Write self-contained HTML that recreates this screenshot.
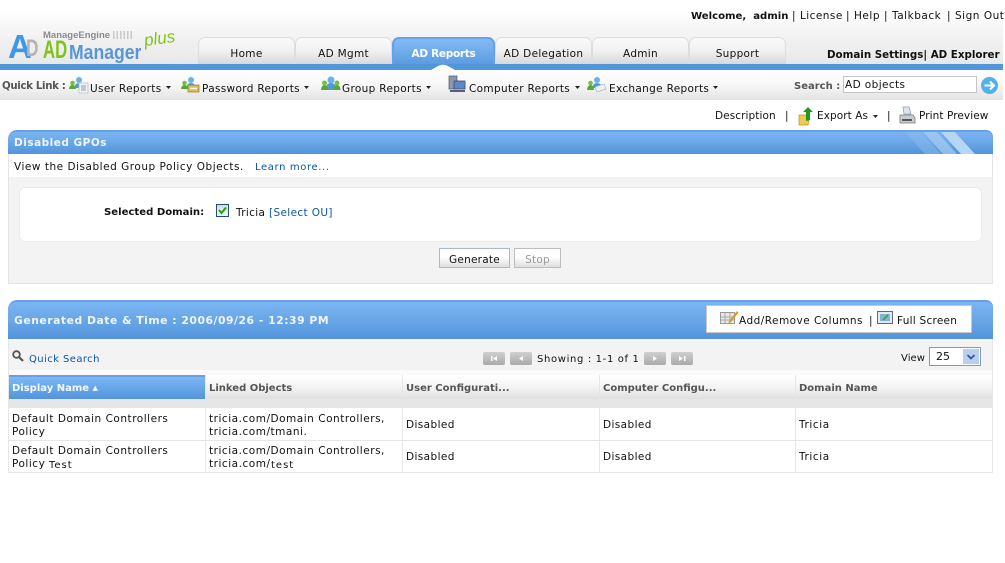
<!DOCTYPE html>
<html><head><meta charset="utf-8">
<style>
html,body{margin:0;padding:0;background:#fff;width:1005px;height:563px;overflow:hidden}
body{position:relative;font-family:"DejaVu Sans","Liberation Sans",sans-serif;font-size:10.5px;color:#111}
.t{position:absolute;white-space:nowrap;line-height:13px;margin-top:1px;letter-spacing:.52px}
.n{letter-spacing:.08px}
.m{letter-spacing:.33px}
.bd{font-weight:bold;letter-spacing:0}
.b{position:absolute}
.tab{position:absolute;top:37px;height:27px;box-sizing:border-box;border:1px solid #ddd;border-bottom:0;border-radius:7px 7px 0 0;background:linear-gradient(#fafafa,#f1f1f1 50%,#d8d8d8);text-align:center;line-height:33px;font-size:10.5px;color:#111;letter-spacing:.3px}
.hd{position:absolute;background:linear-gradient(#79b5f3,#6fabea 35%,#5294db);border-radius:9px 7px 0 0;border-top:2px solid #6a9fe8;box-sizing:border-box}
.th{position:absolute;top:375px;height:24px;background:linear-gradient(#fff,#f4f4f4 50%,#dfdfdf);font-weight:bold;color:#555;font-size:10px;line-height:27px;padding-left:4px;box-sizing:border-box}
.v{position:absolute;background:#e6e6e6;width:2px}
.h{position:absolute;background:#e6e6e6;height:1px}
.l{color:#0a56a6}
.pg{position:absolute;top:352px;width:22px;height:13px;border-radius:2px;background:linear-gradient(#cfcfcf,#aaa)}
.pg svg{display:block}
svg{position:absolute;overflow:visible}
</style></head><body>

<div class="b" style="left:0;top:0;width:1003px;height:64px;background:linear-gradient(#fff,#fff 15%,#f3f3f3 55%,#e8e8e8)"></div>

<!-- logo -->
<div class="t bd" style="left:43px;top:28px;font:bold 9.500px/13px 'Liberation Sans',sans-serif;color:#8b8b8b">ManageEngine</div>
<div class="b" style="left:113px;top:31px;width:20px;height:8px;background:repeating-linear-gradient(90deg,#c8c8c8 0 1.500px,transparent 1.500px 3.500px)"></div>
<div class="t bd" style="left:8px;top:29px;font:bold 33px/33px 'Liberation Sans',sans-serif;color:#3f97ea">A</div>
<div class="t bd" style="left:26px;top:34px;font:bold 24px/28px 'Liberation Sans',sans-serif;color:#b5b5b0;transform:scaleX(.72);transform-origin:left">D</div>
<div class="t bd" style="left:43px;top:37px;font:bold 25px/24px 'Liberation Sans',sans-serif;color:#7fc31c;transform:scaleX(.67);transform-origin:left">AD</div>
<div class="t bd" style="left:69px;top:41px;font:bold 20px/22px 'Liberation Sans',sans-serif;color:#5796da;transform:scaleX(.88);transform-origin:left">Manager</div>
<div class="t bd" style="left:144px;top:27px;font:italic 17px/22px 'Liberation Sans',sans-serif;color:#7fc31c;transform:rotate(-8deg)">plus</div>

<!-- top links -->
<div class="t bd" style="left:691px;top:9px;font-size:10.100px">Welcome,&nbsp; admin</div>
<div class="t" style="left:792px;top:9px">|</div>
<div class="t" style="left:800px;top:9px;letter-spacing:.45px">License</div>
<div class="t" style="left:846px;top:9px">|</div>
<div class="t" style="left:854px;top:9px">Help</div>
<div class="t" style="left:884px;top:9px">|</div>
<div class="t" style="left:892px;top:9px">Talkback</div>
<div class="t" style="left:947px;top:9px">|</div>
<div class="t" style="left:955px;top:9px">Sign Out</div>

<!-- tabs -->
<div class="tab" style="left:198px;width:97px">Home</div>
<div class="tab" style="left:295px;width:97px">AD Mgmt</div>
<div class="tab" style="left:392px;width:103px;border:2px solid #68a0ec;border-bottom:0;background:linear-gradient(#83bcf5,#5b9ce0);color:#fff;font-weight:bold;line-height:31px;letter-spacing:-.3px">AD Reports</div>
<div class="tab" style="left:495px;width:97px">AD Delegation</div>
<div class="tab" style="left:592px;width:97px">Admin</div>
<div class="tab" style="left:689px;width:97px">Support</div>
<div class="t bd" style="left:827px;top:48px;font-size:10.300px">Domain Settings| AD Explorer</div>

<!-- blue bar -->
<div class="b" style="left:0;top:64px;width:1003px;height:6px;background:#5096d9"></div>
<div class="b" style="left:0;top:70px;width:1003px;height:30px;background:linear-gradient(#fff,#f8f8f8 45%,#e3e3e3)"></div>
<svg style="left:431px;top:64px" width="25" height="6"><path d="M0 6 L8 1.5 Q12 0 16 1.5 L24 6Z" fill="#fff"/></svg>

<!-- quick link bar -->
<div class="t bd" style="left:2px;top:79px;color:#555;font-size:10.200px;letter-spacing:-.32px">Quick Link :</div>

<svg style="left:69px;top:76px" width="20" height="17"><circle cx="10" cy="4" r="3" fill="#6cb2e6"/><path d="M5 12q1-5 5-5t5 5z" fill="#4d9ad6"/><circle cx="3.500" cy="7" r="2.300" fill="#74c04c"/><path d="M0 13q.5-4 3.500-4t3.500 4z" fill="#5aa832"/><rect x="10" y="7" width="9" height="10" fill="#f2f2f6" stroke="#b4bcc8" stroke-width=".7"/><path d="M12 10h5M12 12h5M12 14h5" stroke="#8d9db0"/></svg>
<div class="t m" style="left:90px;top:82px">User Reports</div>
<svg style="left:166px;top:86px" width="5" height="3"><path d="M0 0h5L2.500 3z" fill="#222"/></svg>

<svg style="left:181px;top:76px" width="20" height="17"><circle cx="10" cy="4" r="3" fill="#6cb2e6"/><path d="M5 12q1-5 5-5t5 5z" fill="#4d9ad6"/><circle cx="3.500" cy="7" r="2.300" fill="#74c04c"/><path d="M0 13q.5-4 3.500-4t3.500 4z" fill="#5aa832"/><rect x="7" y="9" width="11" height="7" fill="#e3b94c" stroke="#8a7a50" stroke-width=".7"/><path d="M9 12.500h7" stroke="#fff" stroke-width="1.500"/></svg>
<div class="t m" style="left:202px;top:82px">Password Reports</div>
<svg style="left:304px;top:86px" width="5" height="3"><path d="M0 0h5L2.500 3z" fill="#222"/></svg>

<svg style="left:321px;top:76px" width="20" height="17"><circle cx="10" cy="4" r="3.500" fill="#6cb2e6"/><path d="M4 14q1-7 6-7t6 7z" fill="#4d9ad6"/><circle cx="3.500" cy="7" r="2.500" fill="#74c04c"/><path d="M0 14q.5-5 3.500-5t3.500 5z" fill="#5aa832"/><circle cx="16" cy="7" r="2.500" fill="#74c04c"/><path d="M12.500 14q.5-5 3.500-5t3.500 5z" fill="#5aa832"/></svg>
<div class="t m" style="left:342px;top:82px">Group Reports</div>
<svg style="left:426px;top:86px" width="5" height="3"><path d="M0 0h5L2.500 3z" fill="#222"/></svg>

<svg style="left:448px;top:76px" width="18" height="16"><rect x="1" y="0" width="8" height="13" fill="#8b99b0" stroke="#4a5568" stroke-width=".7"/><rect x="6" y="5" width="11" height="8" fill="#5f88c8" stroke="#3e4a60" stroke-width=".8"/><path d="M2 15h15" stroke="#55607a" stroke-width="2"/></svg>
<div class="t m" style="left:469px;top:82px">Computer Reports</div>
<svg style="left:575px;top:86px" width="5" height="3"><path d="M0 0h5L2.500 3z" fill="#222"/></svg>

<svg style="left:587px;top:76px" width="20" height="17"><circle cx="10" cy="4" r="3" fill="#6cb2e6"/><path d="M5 12q1-5 5-5t5 5z" fill="#4d9ad6"/><circle cx="3.500" cy="7" r="2.300" fill="#74c04c"/><path d="M0 14q.5-5 3.500-5t3.500 5z" fill="#5aa832"/><path d="M8 11l9-3 2 5-9 3z" fill="#eef0f5" stroke="#aab2c0" stroke-width=".7"/></svg>
<div class="t m" style="left:609px;top:82px">Exchange Reports</div>
<svg style="left:713px;top:86px" width="5" height="3"><path d="M0 0h5L2.500 3z" fill="#222"/></svg>

<div class="t bd" style="left:794px;top:79px;color:#555;font-size:10px">Search :</div>
<div class="b" style="left:843px;top:76px;width:134px;height:17px;box-sizing:border-box;border:1px solid #c4c4c4;background:#fff;font-size:10.500px;line-height:17px;padding-left:1px;letter-spacing:.4px;white-space:nowrap">AD objects</div>
<svg style="left:981px;top:77px" width="18" height="18"><circle cx="8.500" cy="8.500" r="8.500" fill="#4fb2ea"/><path d="M3.500 8.500h9M9 4.500l4 4-4 4" fill="none" stroke="#fff" stroke-width="2"/></svg>

<!-- actions -->
<div class="t n" style="left:715px;top:109px">Description</div>
<div class="t" style="left:785px;top:109px">|</div>
<svg style="left:798px;top:107px" width="16" height="18"><path d="M1 8h11l-2 10H1z" fill="#f0c94e" stroke="#b8962a" stroke-width=".7"/><path d="M8 14V5H5l5-5 5 5h-3v8z" fill="#1f9a1f"/></svg>
<div class="t n" style="left:817px;top:109px">Export As</div>
<svg style="left:873px;top:115px" width="5" height="3"><path d="M0 0h5L2.500 3z" fill="#222"/></svg>
<div class="t" style="left:887px;top:109px">|</div>
<svg style="left:899px;top:107px" width="17" height="17"><path d="M4 0h6l2 7H5z" fill="#dfe6f0" stroke="#8b97a8" stroke-width=".7"/><path d="M1 8h13l2 3v5H1z" fill="#c9ccd0" stroke="#777" stroke-width=".8"/><path d="M3 13h10" stroke="#555" stroke-width="2"/></svg>
<div class="t n" style="left:919px;top:109px">Print Preview</div>

<!-- panel 1 -->
<div class="hd" style="left:8px;top:130px;width:985px;height:24px;overflow:hidden">
  <svg style="left:895px;top:-2px" width="90" height="24"><path d="M0 0h16l22 24H22z" fill="#8dbcec" opacity=".5"/><path d="M18 0h14l22 24H40z" fill="#a8cdf1" opacity=".7"/><path d="M36 0h14l22 24H58z" fill="#b6d6f4"/></svg>
</div>
<div class="t bd" style="left:14px;top:136px;color:#eef5fd;font-size:10.500px;letter-spacing:.5px">Disabled GPOs</div>
<div class="t" style="left:14px;top:160px">View the Disabled Group Policy Objects.</div>
<div class="t l" style="left:255px;top:160px;font-size:10px;letter-spacing:.62px">Learn more...</div>
<div class="b" style="left:8px;top:177px;width:985px;height:107px;box-sizing:border-box;background:#f3f3f3;border:1px solid #e4e4e4;border-top:0;border-right-color:#e8e8e8"></div>
<div class="b" style="left:8px;top:154px;width:1px;height:24px;background:#e4e4e4"></div>
<div class="b" style="left:992px;top:154px;width:1px;height:24px;background:#e4e4e4"></div>
<div class="b" style="left:19px;top:187px;width:963px;height:55px;box-sizing:border-box;background:#fff;border:1px solid #ececf0;border-radius:6px"></div>
<div class="t bd" style="left:104px;top:205px;font-size:10.100px">Selected Domain:</div>
<div class="b" style="left:216px;top:204px;width:13px;height:13px;box-sizing:border-box;border:1px solid #1f4f78;background:linear-gradient(#dcdcd4,#f6f6f2)"></div>
<svg style="left:216px;top:204px" width="13" height="13"><path d="M3 6l2.500 3L10 3.500" fill="none" stroke="#21a121" stroke-width="2"/></svg>
<div class="t m" style="left:236px;top:206px">Tricia</div>
<div class="t l" style="left:269px;top:206px;font-size:10.500px;letter-spacing:.36px">[Select OU]</div>
<div class="b" style="left:439px;top:248px;width:71px;height:20px;box-sizing:border-box;border:1px solid #a9b8d4;background:linear-gradient(#fff,#fff 45%,#dedede);text-align:center;line-height:23px;color:#111;letter-spacing:.25px">Generate</div>
<div class="b" style="left:514px;top:248px;width:47px;height:20px;box-sizing:border-box;border:1px solid #bdbdbd;background:linear-gradient(#fff,#fff 45%,#dedede);text-align:center;line-height:23px;color:#999;letter-spacing:.25px">Stop</div>

<!-- panel 2 -->
<div class="hd" style="left:8px;top:300px;width:985px;height:39px"></div>
<div class="t bd" style="left:14px;top:313px;color:#eef5fd;font-size:10.800px;letter-spacing:.52px">Generated Date &amp; Time : 2006/09/26 - 12:39 PM</div>
<div class="b" style="left:706px;top:305px;width:266px;height:28px;box-sizing:border-box;background:#fff;border:1px solid #c8c8c8"></div>
<svg style="left:720px;top:310px" width="19" height="16"><rect x=".5" y="2.500" width="14" height="11" fill="#e8e8e8" stroke="#999"/><path d="M5 3v10M10 3v10M1 7h13M1 10h13" stroke="#aaa"/><path d="M9 11L17 1l1.500 1.500L11 12l-2.500 1z" fill="#d99a22"/></svg>
<div class="t" style="left:739px;top:314px;letter-spacing:.47px">Add/Remove Columns</div>
<div class="t" style="left:869px;top:314px">|</div>
<svg style="left:877px;top:311px" width="16" height="13"><rect x=".5" y=".5" width="15" height="12" fill="#e6eaf0" stroke="#667"/><rect x="3" y="3" width="10" height="7" fill="#7fb4d8"/><path d="M6 9l5-5" stroke="#3a9a3a" stroke-width="1.500"/></svg>
<div class="t" style="left:897px;top:314px;letter-spacing:.25px">Full Screen</div>

<div class="b" style="left:8px;top:340px;width:985px;height:30px;background:#f3f3f3"></div>
<div class="b" style="left:8px;top:339px;width:1px;height:134px;background:#e6e6e6"></div>
<div class="b" style="left:992px;top:339px;width:1px;height:134px;background:#e6e6e6"></div>
<svg style="left:12px;top:350px" width="12" height="12"><circle cx="4.500" cy="4.500" r="3.300" fill="none" stroke="#555" stroke-width="1.800"/><path d="M7 7l4 4" stroke="#555" stroke-width="2.200"/></svg>
<div class="t l" style="left:29px;top:352px;font-size:10px;letter-spacing:.42px">Quick Search</div>

<div class="pg" style="left:483px"><svg width="22" height="13" style="position:static"><path d="M8 4h1.500v5H8zM14 4v5l-4-2.500z" fill="#fff"/></svg></div>
<div class="pg" style="left:510px"><svg width="22" height="13" style="position:static"><path d="M13 4v5l-4-2.500z" fill="#fff"/></svg></div>
<div class="t" style="left:537px;top:352px;font-size:10px;letter-spacing:.65px">Showing : 1-1 of 1</div>
<div class="pg" style="left:644px"><svg width="22" height="13" style="position:static"><path d="M9 4v5l4-2.500z" fill="#fff"/></svg></div>
<div class="pg" style="left:671px"><svg width="22" height="13" style="position:static"><path d="M8 4v5l4-2.500zM13 4h1.500v5H13z" fill="#fff"/></svg></div>

<div class="t n" style="left:901px;top:351px;font-size:10px">View</div>
<div class="b" style="left:929px;top:347px;width:52px;height:19px;box-sizing:border-box;border:1px solid #7f9db9;background:#fff;padding-left:6px;line-height:18px;font-size:11px">25</div>
<div class="b" style="left:963px;top:349px;width:16px;height:15px;background:#b9cff0"></div>
<svg style="left:967px;top:354px" width="8" height="6"><path d="M.5 1L4 4.500 7.500 1" fill="none" stroke="#3a5a90" stroke-width="1.800"/></svg>

<!-- table header -->
<div class="b" style="left:9px;top:370px;width:983px;height:5px;background:#fafafa"></div>
<div class="th" style="left:9px;width:196px;height:24px;background:linear-gradient(#6a9fe8,#6a9fe8 2px,#7db8f4 2px,#5294db);color:#f2f8ff;padding-left:3px">Display Name <span style="font-size:7px;position:relative;top:-1px">▲</span></div>
<div class="th" style="left:205px;width:197px">Linked Objects</div>
<div class="th" style="left:402px;width:197px">User Configurati...</div>
<div class="th" style="left:599px;width:196px">Computer Configu...</div>
<div class="th" style="left:795px;width:197px">Domain Name</div>
<div class="b" style="left:9px;top:399px;width:983px;height:9px;background:#e6e6e6"></div>

<div class="h" style="left:8px;top:440px;width:985px"></div>
<div class="h" style="left:8px;top:472px;width:985px"></div>
<div class="v" style="left:205px;top:375px;height:98px;width:1px;background:#e6e6e6"></div>
<div class="v" style="left:402px;top:375px;height:98px;width:1px"></div>
<div class="v" style="left:599px;top:375px;height:98px;width:1px"></div>
<div class="v" style="left:795px;top:375px;height:98px;width:1px"></div>

<div class="t" style="left:12px;top:412px">Default Domain Controllers</div>
<div class="t" style="left:12px;top:425px">Policy</div>
<div class="t" style="left:209px;top:412px">tricia.com/Domain Controllers,</div>
<div class="t" style="left:209px;top:425px">tricia.com/tmani.</div>
<div class="t" style="left:406px;top:418px;letter-spacing:.4px">Disabled</div>
<div class="t" style="left:603px;top:418px;letter-spacing:.4px">Disabled</div>
<div class="t" style="left:799px;top:418px;letter-spacing:.6px">Tricia</div>

<div class="t" style="left:12px;top:444px">Default Domain Controllers</div>
<div class="t" style="left:12px;top:457px">Policy</div>
<div class="t" style="left:49px;top:458px;font-size:10px;letter-spacing:1px">Test</div>
<div class="t" style="left:209px;top:444px">tricia.com/Domain Controllers,</div>
<div class="t" style="left:209px;top:457px">tricia.com/</div>
<div class="t" style="left:271px;top:458px;font-size:10px;letter-spacing:1px">test</div>
<div class="t" style="left:406px;top:450px;letter-spacing:.4px">Disabled</div>
<div class="t" style="left:603px;top:450px;letter-spacing:.4px">Disabled</div>
<div class="t" style="left:799px;top:450px;letter-spacing:.6px">Tricia</div>

</body></html>
